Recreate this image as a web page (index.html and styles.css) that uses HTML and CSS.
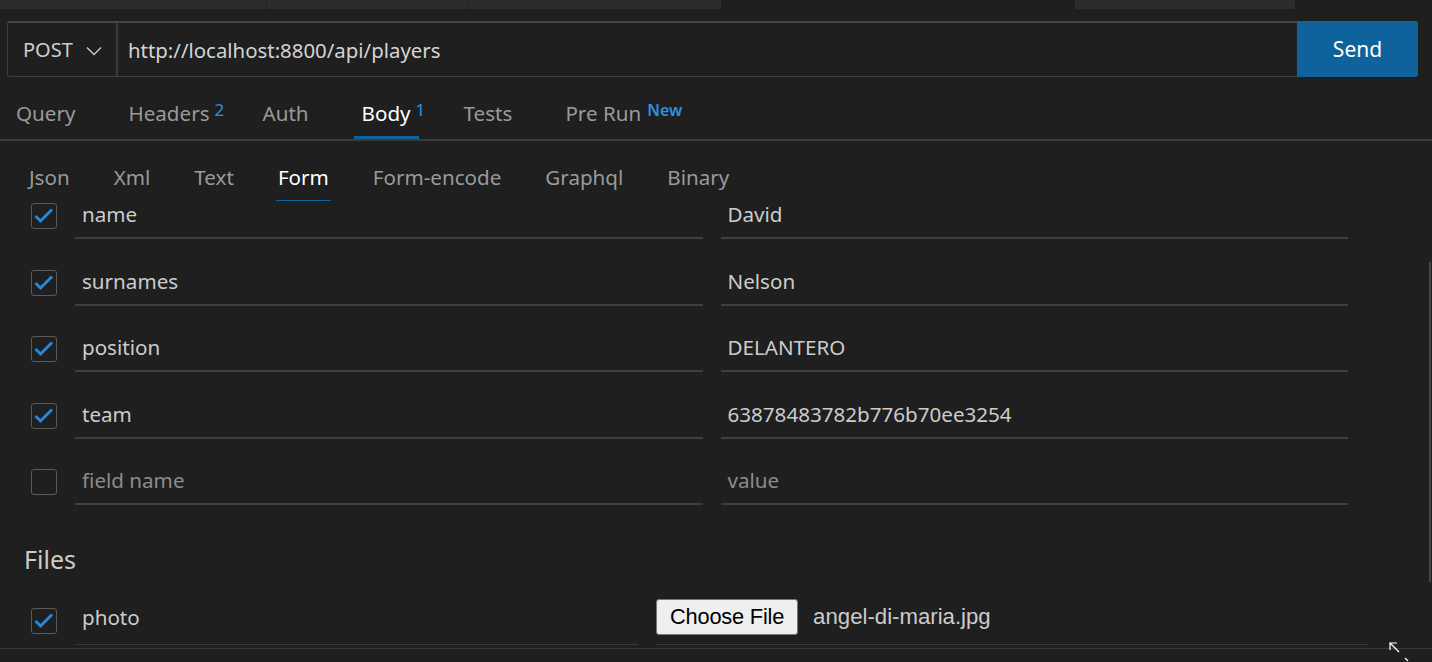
FILE: index.html
```html
<!DOCTYPE html>
<html lang="en">
<head>
<meta charset="utf-8">
<title>Request</title>
<link rel="stylesheet" href="styles.css">
</head>
<body>
<div class="editor-tabs">
  <div class="etab light"></div>
  <div class="etab light w200"></div>
  <div class="etab light w254"></div>
  <div class="etab dark w354"></div>
  <div class="etab light w220"></div>
  <div class="etab dark grow"></div>
</div>

<div class="urlbar">
  <div class="method">
    <span>POST</span>
    <svg class="chev" width="16" height="10" viewBox="0 0 16 10"><polyline points="1,1.5 8,8.5 15,1.5" fill="none" stroke="#c8c8c8" stroke-width="1.4"/></svg>
  </div>
  <div class="url">http://localhost:8800/api/players</div>
  <button class="send">Send</button>
</div>

<div class="tabs">
  <div class="tab">Query</div>
  <div class="tab">Headers<sup class="badge">2</sup></div>
  <div class="tab">Auth</div>
  <div class="tab active">Body<sup class="badge">1</sup></div>
  <div class="tab">Tests</div>
  <div class="tab">Pre Run<sup class="badge new">New</sup></div>
</div>

<div class="subtabs">
  <div class="subtab">Json</div>
  <div class="subtab">Xml</div>
  <div class="subtab">Text</div>
  <div class="subtab active">Form</div>
  <div class="subtab">Form-encode</div>
  <div class="subtab">Graphql</div>
  <div class="subtab">Binary</div>
</div>

<div class="rows">
  <div class="row">
    <span class="cb checked"><svg viewBox="0 0 26 26" width="26" height="26"><polyline points="4.5,13 9.5,18 21,6.5" fill="none" stroke="#2489db" stroke-width="3"/></svg></span>
    <div class="field">name</div>
    <div class="field">David</div>
  </div>
  <div class="row">
    <span class="cb checked"><svg viewBox="0 0 26 26" width="26" height="26"><polyline points="4.5,13 9.5,18 21,6.5" fill="none" stroke="#2489db" stroke-width="3"/></svg></span>
    <div class="field">surnames</div>
    <div class="field">Nelson</div>
  </div>
  <div class="row">
    <span class="cb checked"><svg viewBox="0 0 26 26" width="26" height="26"><polyline points="4.5,13 9.5,18 21,6.5" fill="none" stroke="#2489db" stroke-width="3"/></svg></span>
    <div class="field">position</div>
    <div class="field">DELANTERO</div>
  </div>
  <div class="row">
    <span class="cb checked"><svg viewBox="0 0 26 26" width="26" height="26"><polyline points="4.5,13 9.5,18 21,6.5" fill="none" stroke="#2489db" stroke-width="3"/></svg></span>
    <div class="field">team</div>
    <div class="field">63878483782b776b70ee3254</div>
  </div>
  <div class="row">
    <span class="cb"></span>
    <div class="field ph">field name</div>
    <div class="field ph">value</div>
  </div>
</div>

<h2 class="files-title">Files</h2>

<div class="file-row">
  <span class="cb checked"><svg viewBox="0 0 26 26" width="26" height="26"><polyline points="4.5,13 9.5,18 21,6.5" fill="none" stroke="#2489db" stroke-width="3"/></svg></span>
  <div class="field fname">photo</div>
  <div class="field fileval">
    <span class="choose">Choose File</span>
    <span class="filename">angel-di-maria.jpg</span>
  </div>
</div>

<div class="bottom-line"></div>

<div class="scroll-thumb"></div>

<svg class="cursor" width="22" height="22" viewBox="0 0 22 22">
  <polyline points="2,9 2,2 9,2" fill="none" stroke="#fff" stroke-width="1.2"/>
  <line x1="2" y1="2" x2="11" y2="11" stroke="#fff" stroke-width="1.2"/>
  <line x1="17" y1="17" x2="20" y2="20" stroke="#fff" stroke-width="1.2"/>
</svg>
</body>
</html>
```

FILE: styles.css
```css
* { box-sizing: border-box; }

html, body {
  margin: 0;
  padding: 0;
  background: #1f1f1f;
  color: #cccccc;
  font-family: "Noto Sans", "Segoe UI", sans-serif;
  font-size: 20.6px;
  width: 1432px;
  height: 662px;
  overflow: hidden;
  position: relative;
}

/* top editor tabs strip */
.editor-tabs {
  display: flex;
  height: 9px;
}
.etab { height: 9px; }
.etab.light { background: #2c2c2c; border-right: 1px solid #252525; width: 267px; }
.etab.light.w200 { width: 201px; }
.etab.light.w254 { width: 253px; border-right: none; }
.etab.dark { background: #1f1f1f; }
.etab.w354 { width: 354px; }
.etab.light.w220 { width: 220px; border-right: none; }
.etab.grow { flex: 1; }

/* url bar */
.urlbar {
  display: flex;
  height: 56px;
  margin: 12px 14px 0 7px;
  border: 1px solid #3e3e3e;
  border-top: 2px solid #454545;
  border-radius: 3px;
}
.method {
  width: 110px;
  display: flex;
  align-items: center;
  padding-left: 15px;
  gap: 13px;
  border-right: 2px solid #3a3a3a;
  font-size: 20px;
  color: #cfcfcf;
}
.chev { margin-top: 2px; }
.url {
  flex: 1;
  display: flex;
  align-items: center;
  padding-left: 10px;
  color: #d4d4d4;
  font-size: 20.4px;
}
.send {
  width: 121px;
  margin: -2px -1px -1px 0;
  border: none;
  border-radius: 0 3px 3px 0;
  background: #0e639c;
  color: #ffffff;
  font-family: inherit;
  font-size: 21px;
  padding: 0;
}

/* tabs */
.tabs {
  display: flex;
  height: 64px;
  padding-left: 8px;
  gap: 37px;
  border-bottom: 2px solid #3a3a3a;
}
.tab {
  position: relative;
  padding: 23px 8px 0;
  line-height: 26px;
  height: 62px;
  border-bottom: 3px solid transparent;
  color: #9a9a9a;
}
.tab.active {
  color: #ffffff;
  border-bottom-color: #0e639c;
}
.badge {
  position: absolute;
  left: calc(100% - 3px);
  top: 24px;
  font-size: 17px;
  line-height: 18px;
  color: #2c91e6;
}
.badge.new { left: calc(100% - 2px); font-weight: 600; font-size: 16px; top: 24px; }

/* sub tabs */
.subtabs {
  display: flex;
  padding-left: 27px;
  gap: 40px;
}
.subtab {
  padding: 23px 2px 10px;
  line-height: 26px;
  border-bottom: 1px solid transparent;
  color: #9a9a9a;
}
.subtab.active {
  color: #ffffff;
  border-bottom-color: #0e639c;
}

/* rows */
.rows {
  display: flex;
  flex-direction: column;
  gap: 20.5px;
  margin-top: -8px;
  padding: 0 84px 0 31px;
}
.row {
  display: flex;
  align-items: center;
  gap: 18px;
}
.cb {
  width: 26px;
  height: 26px;
  flex: 0 0 26px;
  border: 1px solid #5a5a5a;
  border-radius: 3px;
  position: relative;
}
.cb svg { position: absolute; left: -1px; top: -1px; }
.field {
  flex: 1;
  height: 46px;
  padding: 9px 7px 0;
  line-height: 24px;
  border-bottom: 2px solid #3f3f3f;
  color: #cccccc;
}
.field.ph { color: #8c8c8c; }

.files-title {
  margin: 38px 0 0 24px;
  font-weight: normal;
  font-size: 25px;
  line-height: 32px;
  color: #cccccc;
}

.file-row {
  display: grid;
  grid-template-columns: 26px 563px 1fr;
  gap: 18px;
  align-items: center;
  padding: 0 64px 0 31px;
  margin-top: 21px;
}
.field.fname, .field.fileval {
  height: 49px;
  border-bottom: 1px solid #3a3a3a;
}
.field.fileval {
  padding: 3px 0 0;
  display: flex;
  align-items: flex-start;
  gap: 15px;
}
.choose {
  display: inline-block;
  height: 36px;
  padding: 0 13px;
  line-height: 33px;
  background: #efefef;
  border: 1px solid #767676;
  border-radius: 3px;
  color: #000;
  font-family: "Liberation Sans", Arial, sans-serif;
  font-size: 21.8px;
  letter-spacing: -0.2px;
}
.filename {
  font-family: "Liberation Sans", Arial, sans-serif;
  font-size: 22.2px;
  line-height: 36px;
  color: #cccccc;
}

.bottom-line {
  margin-top: 3px;
  height: 1px;
  background: #3a3a3a;
}

.scroll-thumb {
  position: absolute;
  right: 1px;
  top: 262px;
  width: 2px;
  height: 320px;
  background: #474747;
}

.cursor {
  position: absolute;
  left: 1388px;
  top: 641px;
}
```
